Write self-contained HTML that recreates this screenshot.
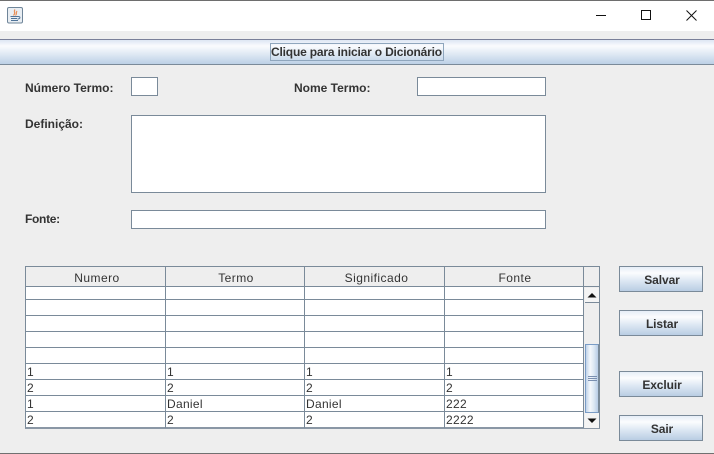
<!DOCTYPE html>
<html><head><meta charset="utf-8">
<style>
html,body{margin:0;padding:0;width:714px;height:454px;overflow:hidden;background:#eeeeee;font-family:"Liberation Sans",sans-serif;}
div{position:absolute;box-sizing:border-box;}
.lbl{font-weight:bold;font-size:12px;color:#333;line-height:14px;white-space:nowrap;}
.fld{background:#fff;border:1px solid #7a8a99;}
.btn{left:620px;width:84px;height:26px;font-weight:bold;font-size:12px;color:#333;text-align:center;line-height:28px;letter-spacing:-0.1px;}
.bb{left:619px;width:84px;height:26px;border:1px solid #7a8a99;background:linear-gradient(#e6eef7 0%,#fbfcfe 25%,#dfe9f4 55%,#b9cde3 100%);}
.h{top:267px;height:19px;font-size:12px;color:#333;text-align:center;line-height:22px;letter-spacing:0.45px;}
.c{font-size:12px;color:#333;line-height:16px;white-space:nowrap;letter-spacing:0.3px;}
.hl{left:26px;width:557px;height:1px;background:#7a8a99;}
.vl{top:267px;height:161px;width:1px;background:#7a8a99;}
</style></head><body>
<div style="left:0;top:0;width:714px;height:31px;background:#fff;"></div>
<div style="left:0;top:0;width:714px;height:1px;background:#6e6e6e;"></div>
<svg style="position:absolute;left:7px;top:7px" width="16" height="17" viewBox="0 0 16 17">
<rect x="0.5" y="0.5" width="15" height="15.5" rx="1.5" fill="#e9eef3" stroke="#6f8599"/>
<path d="M8 2.5C6 5 9.5 5.5 6.5 8.5M10 4C8.5 6 10.5 6.5 8.5 8.5" stroke="#e8905a" stroke-width="1.2" fill="none"/>
<path d="M3.5 9.5H10.5M4 11.5H10M4 13.5H11M10.5 9.5C14 9 13.5 12 10.5 12" stroke="#4f7398" stroke-width="1" fill="none"/>
</svg>
<svg style="position:absolute;left:590px;top:5px" width="124" height="22" viewBox="0 0 124 22">
<path d="M6 10.5H16" stroke="#111" stroke-width="1"/>
<rect x="51.5" y="5.5" width="9" height="9" fill="none" stroke="#111" stroke-width="1"/>
<path d="M96.5 5.5L106.5 15.5M106.5 5.5L96.5 15.5" stroke="#111" stroke-width="1"/>
</svg>

<div style="left:0;top:39px;width:714px;height:26px;border-top:1px solid #7a8099;border-bottom:1px solid #7a8a99;background:linear-gradient(#dde6f3 0%,#fafbfe 25%,#e2ebf5 55%,#bcd0e6 100%);"></div>
<div style="left:270px;top:43px;width:174px;height:18px;border:1px solid #8fa6bd;"></div>
<div style="left:271px;top:43px;font-weight:bold;font-size:12px;color:#333;line-height:18px;white-space:nowrap;letter-spacing:-0.18px;">Clique para iniciar o Dicionário</div>

<div class="lbl" style="left:25px;top:81px;">Número Termo:</div>
<div class="fld" style="left:131px;top:77px;width:27px;height:19px;"></div>
<div class="lbl" style="left:294px;top:81px;">Nome Termo:</div>
<div class="fld" style="left:417px;top:77px;width:129px;height:19px;"></div>
<div class="lbl" style="left:25px;top:117px;">Definição:</div>
<div class="fld" style="left:131px;top:115px;width:415px;height:78px;"></div>
<div class="lbl" style="left:25px;top:212px;letter-spacing:-0.3px;">Fonte:</div>
<div class="fld" style="left:131px;top:210px;width:415px;height:19px;"></div>

<div style="left:25px;top:266px;width:575px;height:163px;border:1px solid #7a8a99;border-bottom:2px solid #8a97a5;background:#fff;"></div>
<div style="left:26px;top:267px;width:557px;height:19px;background:#eeeeee;"></div>
<div class="h" style="left:27px;width:140px;">Numero</div>
<div class="h" style="left:166px;width:140px;">Termo</div>
<div class="h" style="left:307px;width:139px;">Significado</div>
<div class="h" style="left:446px;width:138px;">Fonte</div>
<div style="left:584px;top:267px;width:15px;height:19px;background:#eeeeee;"></div>
<div class="hl" style="top:286px;"></div>
<div class="hl" style="top:299px;"></div>
<div class="hl" style="top:315px;"></div>
<div class="hl" style="top:331px;"></div>
<div class="hl" style="top:347px;"></div>
<div class="hl" style="top:363px;"></div>
<div class="hl" style="top:379px;"></div>
<div class="hl" style="top:395px;"></div>
<div class="hl" style="top:411px;"></div>
<div class="vl" style="left:165px;"></div>
<div class="vl" style="left:304px;"></div>
<div class="vl" style="left:444px;"></div>
<div style="left:583px;top:267px;width:1px;height:161px;background:#7a8a99;"></div>
<div style="left:584px;top:286px;width:15px;height:1px;background:#7a8a99;"></div>

<div class="c" style="left:27px;top:364px;">1</div><div class="c" style="left:167px;top:364px;">1</div><div class="c" style="left:306px;top:364px;">1</div><div class="c" style="left:446px;top:364px;">1</div>
<div class="c" style="left:27px;top:380px;">2</div><div class="c" style="left:167px;top:380px;">2</div><div class="c" style="left:306px;top:380px;">2</div><div class="c" style="left:446px;top:380px;">2</div>
<div class="c" style="left:27px;top:396px;">1</div><div class="c" style="left:167px;top:396px;">Daniel</div><div class="c" style="left:306px;top:396px;">Daniel</div><div class="c" style="left:446px;top:396px;">222</div>
<div class="c" style="left:27px;top:412px;">2</div><div class="c" style="left:167px;top:412px;">2</div><div class="c" style="left:306px;top:412px;">2</div><div class="c" style="left:446px;top:412px;">2222</div>

<div style="left:584px;top:287px;width:15px;height:141px;background:#eeeeee;"></div>
<div style="left:585px;top:288px;width:14px;height:15px;background:#f4f4f4;border-bottom:1px solid #7a8a99;"></div>
<svg style="position:absolute;left:585px;top:291px" width="14" height="8"><path d="M2.5 6.5L7 2L11.5 6.5Z" fill="#111"/></svg>
<div style="left:585px;top:344px;width:14px;height:69px;border:1px solid #7a9cc6;border-right:1px solid #7a8a99;background:linear-gradient(90deg,#c0d3e9 0%,#f4f8fc 35%,#dde8f4 65%,#b8cde6 100%);"></div>
<div style="left:588px;top:376px;width:9px;height:1px;background:#7a8fb0;"></div>
<div style="left:588px;top:378px;width:9px;height:1px;background:#7a8fb0;"></div>
<div style="left:588px;top:380px;width:9px;height:1px;background:#7a8fb0;"></div>
<div style="left:585px;top:413px;width:14px;height:15px;background:#f4f4f4;"></div>
<svg style="position:absolute;left:585px;top:417px" width="14" height="8"><path d="M2.5 1.5L7 6L11.5 1.5Z" fill="#111"/></svg>

<div class="bb" style="top:266px;"></div><div class="btn" style="top:266px;">Salvar</div>
<div class="bb" style="top:310px;"></div><div class="btn" style="top:310px;">Listar</div>
<div class="bb" style="top:371px;"></div><div class="btn" style="top:371px;">Excluir</div>
<div class="bb" style="top:415px;"></div><div class="btn" style="top:415px;">Sair</div>

<div style="left:0;top:453px;width:714px;height:1px;background:#707070;"></div>
</body></html>
